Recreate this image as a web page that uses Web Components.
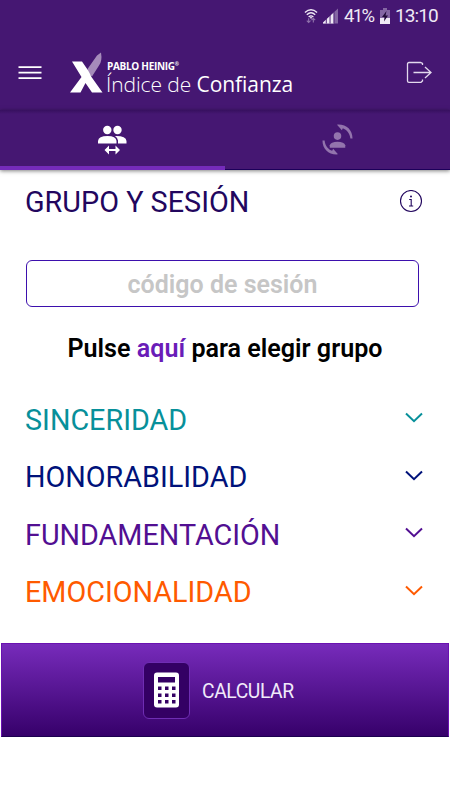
<!DOCTYPE html>
<html lang="es">
<head>
<meta charset="utf-8">
<title>Índice de Confianza</title>
<style>
  body {
    margin: 0;
    background: #fff;
    font-family: Roboto, "Noto Sans", sans-serif;
  }
</style>
</head>
<body>
<trust-app></trust-app>

<script>
(function() {
  // Small base class: every element only has to return its markup
  class BaseElement extends HTMLElement {
    constructor() {
      super();
      this.attachShadow({ mode: 'open' });
    }

    connectedCallback() {
      this.shadowRoot.innerHTML = this.template();
    }
  }

  class StatusBar extends BaseElement {
    template() {
      return `
        <style>
          :host {
            display: flex;
            align-items: center;
            justify-content: flex-end;
            height: 32px;
            padding-right: 13px;
            box-sizing: border-box;
            color: #efe9f5;
            font-size: 19px;
            line-height: 32px;
          }
          svg { flex: none; }
          .wifi { margin-right: 5px; }
          .signal { margin-right: 6px; }
          .battery { margin: 0 5px; }
          .level { letter-spacing: -1.6px; margin-right: 1.6px; font-size: 18.5px; }
          .time { letter-spacing: -0.9px; margin-right: -0.9px; }
        </style>
        <svg class="wifi" width="14" height="16" viewBox="0 0 15 16" fill="none" stroke="#efe9f5" stroke-width="1.5">
          <path d="M1 4.2Q7.500-1.600 14 4.200M3 6.700Q7.500 2.500 12 6.700M5 9Q7.500 6.700 10 9"/>
          <circle cx="7.500" cy="9.800" r="1" fill="#efe9f5" stroke="none"/>
          <path d="M5 10.500V15M3 13L5 15L7 13M10 15V10.500M8 12.500L10 10.500L12 12.500" stroke="#8e70aa" stroke-width="1.200"/>
        </svg>
        <svg class="signal" width="15" height="16" viewBox="0 0 16 16">
          <path d="M0 16V15L16 0V16Z" fill="#8466a3"/>
          <path d="M0 16V15L11.500 4.200V16Z" fill="#efe9f5"/>
          <path d="M3.500 11V16M7.500 7V16M11.700 4V16" stroke="#451772"/>
        </svg>
        <span class="level">41%</span>
        <svg class="battery" width="10" height="16" viewBox="0 0 10 16">
          <path d="M3 0H7V2H10V16H0V2H3Z" fill="#8466a3"/>
          <path d="M0 10H10V16H0Z" fill="#efe9f5"/>
          <path d="M6.500 3L2 9H4.500L4 13.500L8 7.500H5.500Z" fill="#210b38"/>
        </svg>
        <span class="time">13:10</span>
      `;
    }
  }

  class BrandLogo extends BaseElement {
    template() {
      return `
        <style>
          :host {
            display: flex;
            align-items: flex-start;
            color: #fff;
          }
          .mark { flex: none; margin-right: 3px; }
          .words { padding-top: 9px; white-space: nowrap; }
          .owner {
            height: 11px;
            padding-left: 1px;
            font: 700 10px/11px "Open Sans", sans-serif;
            letter-spacing: -0.3px;
          }
          sup {
            font-size: 5px;
            line-height: 0;
            vertical-align: 4px;
          }
          .product {
            font: 300 21px/24px "Open Sans", sans-serif;
            letter-spacing: -0.08px;
          }
          b { font-weight: 400; }
        </style>
        <svg class="mark" width="33" height="41" viewBox="0 0 33 41">
          <path d="M19 22L17.500 17L27 3.500L31 0.500Q32.500 9 29 13.500L22 24.500Z" fill="#a58bba"/>
          <path d="M2 9.500H12L18.500 19L21.500 25L32.500 40.500H22L15.500 31L10.500 40.500H0L11.500 25Z" fill="#fff"/>
        </svg>
        <div class="words">
          <div class="owner">PABLO HEINIG<sup>®</sup></div>
          <div class="product">Índice de <b>Confianza</b></div>
        </div>
      `;
    }
  }

  class AppHeader extends BaseElement {
    template() {
      return `
        <style>
          :host {
            display: flex;
            align-items: flex-start;
            height: 78px;
            box-sizing: border-box;
            padding: 20px 18px 0 18px;
          }
          .menu { margin: 14px 28px 0 0; }
          .exit { margin: 7px 0 0 auto; }
        </style>
        <svg class="menu" width="24" height="14" viewBox="0 0 24 14" stroke="#fff" stroke-width="1.700">
          <path d="M0.500 1.200H23.500M0.500 6.700H23.500M0.500 12.200H23.500"/>
        </svg>
        <brand-logo></brand-logo>
        <svg class="exit" width="26" height="24" viewBox="0 0 26 24" fill="none" stroke="#e3d9ed" stroke-width="1.300">
          <path d="M16.500 6V4.500L14.500 3.500H3Q1.500 3.500 1.500 5V22Q1.500 23.300 3 23.300H15L16.500 22V20.500M7.500 13.500H25M19 8L25 13.500L19 19"/>
        </svg>
      `;
    }
  }

  class TabBar extends BaseElement {
    template() {
      return `
        <style>
          :host {
            display: grid;
            grid-template-columns: 1fr 1fr;
            height: 60px;
            background: linear-gradient(#37105f 0, #451772 4px);
            box-shadow: 0 1px 4px rgba(0, 0, 0, 0.5);
          }
          .tab {
            display: flex;
            justify-content: center;
            align-items: center;
            box-sizing: border-box;
            border-bottom: 1px solid #1c005a;
          }
          .tab.active {
            padding: 3px 1px 0 0;
            border-bottom: 4px solid #752bbb;
          }
        </style>
        <div class="tab active">
          <svg width="30" height="30" viewBox="0 0 30 30" fill="#fff">
            <circle cx="10.300" cy="5" r="4.200"/>
            <circle cx="20.500" cy="5" r="4.200"/>
            <path d="M1 18.500V16Q1.500 11 10.500 11Q19 11 19.500 16V18.500Z"/>
            <path d="M21 18.500V15.500Q20.500 12.500 18 11Q29 10.700 29.500 16V18.500Z"/>
            <path d="M7.500 25L12 20.500V24H18.500V20.500L23 25L18.500 29.500V26H12V29.500Z"/>
          </svg>
        </div>
        <div class="tab">
          <svg width="31" height="31" viewBox="0 0 32 32" fill="#9374ad">
            <circle cx="16" cy="12.500" r="3.900"/>
            <path d="M8 24.500V22Q9 18.300 16 18.300Q23 18.300 24 22V24.500Z"/>
            <path d="M15.500 0.700C25 0 31.500 6 31.500 15H29.300C28.800 9.500 25.500 5.800 21.500 4.300L20.500 6.500Z"/>
            <path d="M16.500 31.300C7 32 .500 26 .500 17H2.700C3.200 22.500 6.500 26.200 10.500 27.700L11.500 25.500Z"/>
          </svg>
        </div>
      `;
    }
  }

  class SectionTitle extends BaseElement {
    template() {
      return `
        <style>
          :host {
            display: flex;
            justify-content: space-between;
            align-items: center;
            height: 34px;
            padding: 0 27px 0 25px;
            color: #22065e;
            font-size: 28.8px;
            white-space: nowrap;
          }
          svg { flex: none; }
        </style>
        <span><slot></slot></span>
        <svg width="24" height="24" viewBox="0 0 24 24" fill="none" stroke="#22065e" stroke-width="1.100">
          <circle cx="12" cy="11" r="10.500"/>
          <path d="M10.200 9.500H12.200V16M10 16H14.200" />
          <circle cx="12" cy="6.500" r="1" fill="#22065e" stroke="none"/>
        </svg>
      `;
    }
  }

  class CodeField extends BaseElement {
    template() {
      return `
        <style>
          :host { display: block; }
          .field {
            height: 47px;
            box-sizing: border-box;
            border: 1px solid #3d10ad;
            border-radius: 6px;
            color: #c6c6c6;
            font-size: 25px;
            font-weight: 600;
            line-height: 48px;
            text-align: center;
          }
        </style>
        <div class="field"><slot></slot></div>
      `;
    }
  }

  class TopicRow extends BaseElement {
    template() {
      return `
        <style>
          :host {
            display: flex;
            justify-content: space-between;
            align-items: center;
            height: 57.5px;
            padding: 0 27px 0 25px;
            color: ${this.getAttribute('color')};
            font-size: 28.75px;
            white-space: nowrap;
          }
          svg { flex: none; margin-top: -4px; }
        </style>
        <span><slot></slot></span>
        <svg width="18" height="11" viewBox="0 0 18 11" fill="none" stroke="currentColor" stroke-width="2">
          <path d="M1 1.500L9 9.200L17 1.500"/>
        </svg>
      `;
    }
  }

  class CalcButton extends BaseElement {
    template() {
      return `
        <style>
          :host {
            display: flex;
            align-items: center;
            height: 94px;
            margin: 0 1px;
            padding-left: 141px;
            box-sizing: border-box;
            border: 1px solid #6a12b0;
            border-bottom-color: #1c0050;
            background: linear-gradient(#772bbb, #36006a);
            color: #f1eafa;
            font-size: 19.3px;
            letter-spacing: -0.4px;
          }
          .box {
            display: flex;
            align-items: center;
            justify-content: center;
            width: 47px;
            height: 57px;
            margin-right: 12px;
            box-sizing: border-box;
            border: 1px solid #6f2db3;
            border-radius: 6px;
            background: #340064;
          }
          .label { padding-top: 2px; }
        </style>
        <span class="box">
          <svg width="25" height="36" viewBox="0 0 25 36">
            <rect x="0" y="0.500" width="25" height="35" rx="3" fill="#fff"/>
            <path d="M4 5H21V10.500H4ZM4 14.500H7.500V18H4ZM11 14.500H14.500V18H11ZM18 14.500H21.500V18H18ZM4 21.500H7.500V25H4ZM11 21.500H14.500V25H11ZM18 21.500H21.500V25H18ZM4 28H7.500V31.500H4ZM11 28H14.500V31.500H11ZM18 28H21.500V31.500H18Z" fill="#340064"/>
          </svg>
        </span>
        <span class="label"><slot></slot></span>
      `;
    }
  }

  class TrustApp extends BaseElement {
    template() {
      return `
        <style>
          :host {
            display: block;
            width: 450px;
            height: 800px;
            overflow: hidden;
            background: #fff;
          }
          .top { background: #451772; }
          section-title { margin-top: 15px; }
          code-field { margin: 41px 31px 0 26px; }
          .hint {
            margin: 26px 0 0;
            font-size: 25.1px;
            font-weight: 600;
            line-height: 32px;
            text-align: center;
            color: #000;
          }
          .hint span { color: #6a1cb8; }
          .topics { margin-top: 26px; }
          calc-button { margin-top: 22px; }
        </style>
        <div class="top">
          <status-bar></status-bar>
          <app-header></app-header>
          <tab-bar></tab-bar>
        </div>
        <section-title>GRUPO Y SESIÓN</section-title>
        <code-field>código de sesión</code-field>
        <p class="hint">Pulse <span>aquí</span> para elegir grupo</p>
        <div class="topics">
          <topic-row color="#07909a">SINCERIDAD</topic-row>
          <topic-row color="#00127a">HONORABILIDAD</topic-row>
          <topic-row color="#520f92">FUNDAMENTACIÓN</topic-row>
          <topic-row color="#ff5a00">EMOCIONALIDAD</topic-row>
        </div>
        <calc-button>CALCULAR</calc-button>
      `;
    }
  }

  customElements.define('status-bar', StatusBar);
  customElements.define('brand-logo', BrandLogo);
  customElements.define('app-header', AppHeader);
  customElements.define('tab-bar', TabBar);
  customElements.define('section-title', SectionTitle);
  customElements.define('code-field', CodeField);
  customElements.define('topic-row', TopicRow);
  customElements.define('calc-button', CalcButton);
  customElements.define('trust-app', TrustApp);
})();
</script>
</body>
</html>
